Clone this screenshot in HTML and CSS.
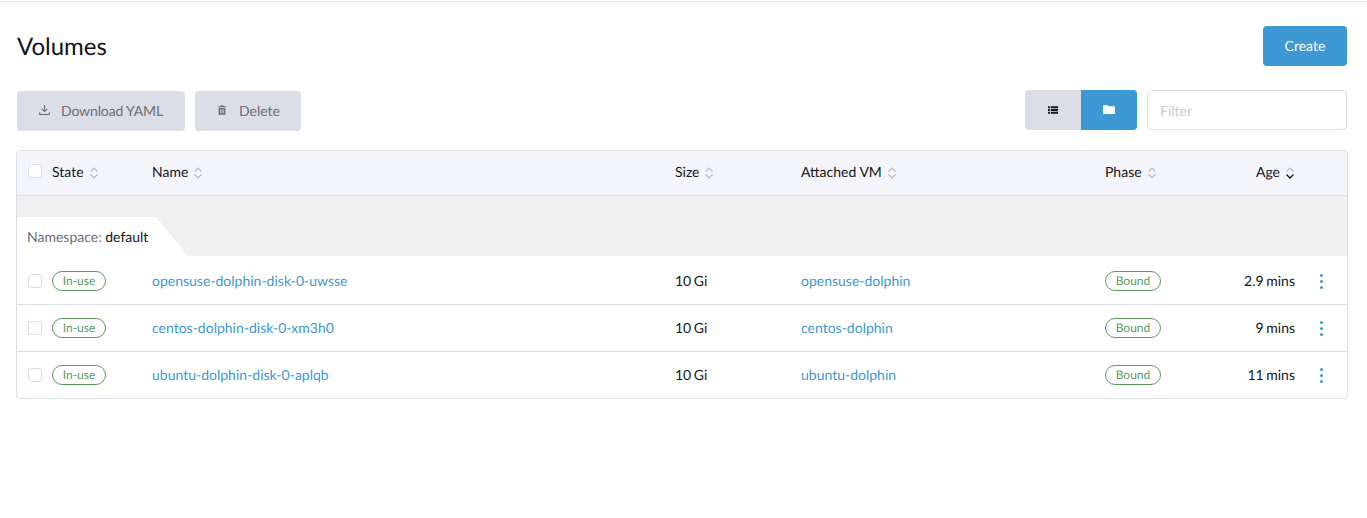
FILE: index.html
```html
<!DOCTYPE html>
<html lang="en">
<head>
<meta charset="utf-8">
<title>Volumes</title>
<link rel="stylesheet" href="styles.css">
</head>
<body>
<main class="page">
  <header class="title-bar">
    <h1 class="title">Volumes</h1>
    <button class="btn btn-primary btn-create"><span class="btn-label">Create</span></button>
  </header>
  <div class="toolbar">
    <div class="actions">
      <button class="btn btn-disabled btn-download">
        <svg class="ico" viewBox="0 0 12 12"><path d="M6 .5v7M3 4.800 6 7.800l3-3M.8 8.500v2.300h10.400V8.500" fill="none" stroke="#6c6c76" stroke-width="1.100"/></svg>
        <span class="btn-label btn-label-tight">Download YAML</span>
      </button>
      <button class="btn btn-disabled btn-delete">
        <svg class="ico ico-trash" viewBox="0 0 10 12"><path d="M3.500 0h3l.5 1.200h3V2.600H0V1.200h3zM.8 3.400h8.400V12H.8zM2.600 5v5.200h.9V5zm1.900 0v5.200h1V5zm2 0v5.200h.9V5z" fill="#6c6c76" fill-rule="evenodd"/></svg>
        <span class="btn-label">Delete</span>
      </button>
    </div>
    <div class="tools">
      <div class="toggle">
        <span class="toggle-item">
          <svg class="ico-small" viewBox="0 0 11 8"><path d="M0 0h2v2H0zM3 0h8v2H3zM0 3h2v2H0zM3 3h8v2H3zM0 6h2v2H0zM3 6h8v2H3z" fill="#141419"/></svg>
        </span>
        <span class="toggle-item is-active">
          <svg class="ico-folder" viewBox="0 0 12 9"><path d="M0 1a1 1 0 0 1 1-1h3l1.300 1.300H11a1 1 0 0 1 1 1V8a1 1 0 0 1-1 1H1a1 1 0 0 1-1-1z" fill="#fff"/></svg>
        </span>
      </div>
      <input class="filter" type="text" placeholder="Filter">
    </div>
  </div>

  <section class="table">
    <div class="row head">
      <span class="check"></span>
      <span class="cell"><span class="cell-text">State</span> <svg class="sort" viewBox="0 0 10 12"><path d="M1.500 4.500 5 1l3.500 3.500M1.500 7.500 5 11l3.500-3.500" fill="none" stroke="#b6b9c4" stroke-width="1.100"/></svg></span>
      <span class="cell"><span class="cell-text">Name</span> <svg class="sort" viewBox="0 0 10 12"><path d="M1.500 4.500 5 1l3.500 3.500M1.500 7.500 5 11l3.500-3.500" fill="none" stroke="#b6b9c4" stroke-width="1.100"/></svg></span>
      <span class="cell"><span class="cell-text">Size</span> <svg class="sort" viewBox="0 0 10 12"><path d="M1.500 4.500 5 1l3.500 3.500M1.500 7.500 5 11l3.500-3.500" fill="none" stroke="#b6b9c4" stroke-width="1.100"/></svg></span>
      <span class="cell"><span class="cell-text">Attached VM</span> <svg class="sort" viewBox="0 0 10 12"><path d="M1.500 4.500 5 1l3.500 3.500M1.500 7.500 5 11l3.500-3.500" fill="none" stroke="#b6b9c4" stroke-width="1.100"/></svg></span>
      <span class="cell"><span class="cell-text">Phase</span> <svg class="sort" viewBox="0 0 10 12"><path d="M1.500 4.500 5 1l3.500 3.500M1.500 7.500 5 11l3.500-3.500" fill="none" stroke="#b6b9c4" stroke-width="1.100"/></svg></span>
      <span class="cell cell-age"><span class="cell-text">Age</span> <svg class="sort" viewBox="0 0 10 12"><path d="M1.500 4.500 5 1l3.500 3.500" fill="none" stroke="#b6b9c4" stroke-width="1.100"/><path d="M1.500 7.500 5 11l3.500-3.500" fill="none" stroke="#141419" stroke-width="1.300"/></svg></span>
      <span></span>
    </div>
    <div class="group">
      <div class="group-tab"><span class="group-label">Namespace:</span> default</div>
    </div>
    <div class="row body">
      <span class="check"></span>
      <span><span class="badge badge-state">In-use</span></span>
      <a class="link lift">opensuse-dolphin-disk-0-uwsse</a>
      <span class="lift tight">10 Gi</span>
      <a class="link lift">opensuse-dolphin</a>
      <span><span class="badge badge-phase">Bound</span></span>
      <span class="cell-age lift tight">2.9 mins</span>
      <span class="more"><i></i><i></i><i></i></span>
    </div>
    <div class="row body">
      <span class="check"></span>
      <span><span class="badge badge-state">In-use</span></span>
      <a class="link lift">centos-dolphin-disk-0-xm3h0</a>
      <span class="lift tight">10 Gi</span>
      <a class="link lift">centos-dolphin</a>
      <span><span class="badge badge-phase">Bound</span></span>
      <span class="cell-age lift tight">9 mins</span>
      <span class="more"><i></i><i></i><i></i></span>
    </div>
    <div class="row body">
      <span class="check"></span>
      <span><span class="badge badge-state">In-use</span></span>
      <a class="link lift">ubuntu-dolphin-disk-0-aplqb</a>
      <span class="lift tight">10 Gi</span>
      <a class="link lift">ubuntu-dolphin</a>
      <span><span class="badge badge-phase">Bound</span></span>
      <span class="cell-age lift tight">11 mins</span>
      <span class="more"><i></i><i></i><i></i></span>
    </div>
  </section>
</main>
</body>
</html>
```
FILE: styles.css
```css
* { box-sizing: border-box; }
html, body { margin: 0; padding: 0; background: #fff; }
body { font-family: Lato, "Open Sans", sans-serif; font-size: 14px; color: #141419; text-rendering: geometricPrecision; }
.page { height: 518px; margin-top: 1px; border-top: 1px solid #dcdee7; padding: 24px 19px 0 16px; overflow: hidden; }

.title-bar { display: flex; justify-content: space-between; align-items: center; height: 40px; padding: 0 1px; }
.title { margin: 2px 0 0; font-size: 24px; font-weight: 400; line-height: 38px; }

.btn { display: inline-flex; align-items: center; justify-content: center; height: 40px; border: 0; border-radius: 4px; font: inherit; font-size: 14px; padding: 0; text-rendering: geometricPrecision; }
.btn-label { margin-top: -2px; }
.btn-label-tight { letter-spacing: -.13px; }
.btn-primary { background: #3d98d3; color: #fff; }
.btn-create { width: 84px; }
.btn-disabled { background: #dcdee7; color: #6c6c76; }
.btn-download { width: 168px; gap: 11px; }
.btn-delete { width: 106px; gap: 13px; padding-left: 2px; }
.ico { width: 11px; height: 12px; margin-top: -2px; }
.ico-trash { width: 8px; height: 10px; }

.toolbar { display: flex; justify-content: space-between; align-items: flex-start; margin-top: 24px; padding: 0 1px; height: 41px; }
.actions { display: flex; gap: 10px; margin-top: 1px; }
.tools { display: flex; gap: 10px; }
.toggle { display: flex; border-radius: 4px; overflow: hidden; }
.toggle-item { display: flex; align-items: center; justify-content: center; width: 56px; height: 40px; background: #dcdee7; }
.toggle-item.is-active { background: #3d98d3; }
.ico-small { width: 10px; height: 8px; margin-top: -1px; }
.ico-folder { width: 12px; height: 9px; margin-top: -1px; }
.filter { width: 200px; height: 40px; border: 1px solid #dcdee7; border-radius: 4px; padding: 0 12px; font: inherit; font-size: 14px; outline: 0; text-rendering: geometricPrecision; }
.filter::placeholder { color: #c8cbd8; opacity: 1; }

.table { margin-top: 19px; width: 1332px; border: 1px solid #dcdee7; border-radius: 4px; overflow: hidden; }
.row { display: grid; grid-template-columns: 35px 100px 523px 126px 304px 100px 90px 1fr; align-items: center; }
.head { height: 45px; background: #f4f5fa; border-bottom: 1px solid #dcdee7; }
.head .check { margin-top: -4px; }
.body { height: 47px; border-bottom: 1px solid #dcdee7; }
.body:last-child { border-bottom: 0; height: 46px; }
.lift { margin-top: -2px; }
.tight { word-spacing: -1px; }
.cell { display: flex; align-items: center; gap: 5px; margin-top: -2px; }
.cell-text { margin-top: -2px; }
.cell-age { text-align: right; justify-content: flex-end; }
.sort { width: 10px; height: 14px; margin-top: 2px; }
.check { justify-self: start; margin-left: 11px; width: 14px; height: 14px; border: 1px solid #dcdee7; border-radius: 3px; background: #fff; }

.group { height: 60px; margin-bottom: 2px; padding-top: 21px; background: #f0f0f0; }
.group-tab { width: 171px; height: 39px; padding: 10px 0 0 10px; line-height: 20px; background: #fff; border-top-left-radius: 4px; clip-path: polygon(0 0, 139px 0, 171px 100%, 0 100%); font-size: 14px; }
.group-label { color: #6c6c76; }

.link { color: #3d98d3; text-decoration: none; }
.badge { display: inline-block; height: 20px; line-height: 18px; border-radius: 10px; font-size: 12px; text-align: center; border: 1px solid #5d995d; color: #5d995d; background: #fff; }
.badge-state { width: 54px; }
.badge-phase { width: 56px; }
.more { display: flex; flex-direction: column; align-items: center; gap: 3px; width: 52px; }
.more i { width: 3px; height: 3px; border-radius: 50%; background: #3d98d3; }
```
